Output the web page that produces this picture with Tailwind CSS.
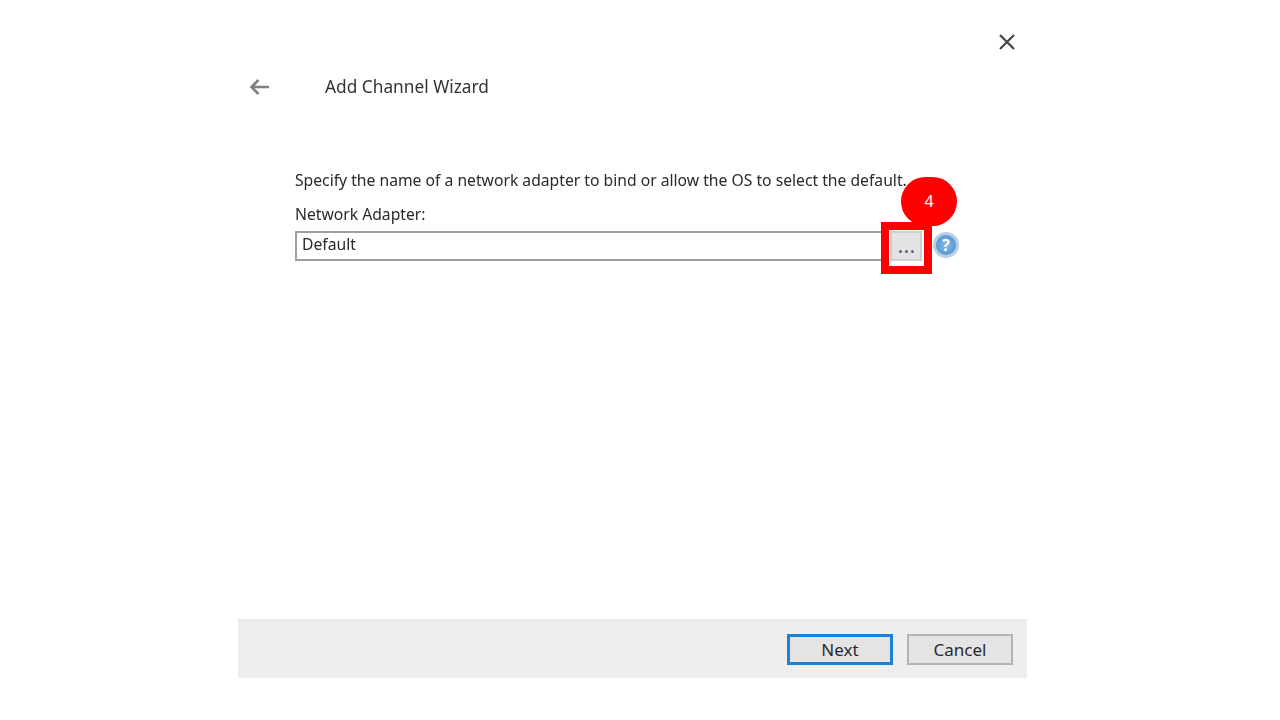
<!DOCTYPE html>
<html lang="en">
<head>
  <meta charset="UTF-8">
  <title>Add Channel Wizard</title>
  <script src="https://cdn.jsdelivr.net/npm/@tailwindcss/browser@4"></script>
</head>
<body class="bg-white font-['Noto_Sans',sans-serif] text-[#333]">
  <div class="relative w-[1280px] h-[720px] overflow-hidden">
    <!-- Wizard window -->
    <div class="ml-[238px] w-[789px] h-[678px] flex flex-col blur-[0.6px]">
      <div class="h-[619px] relative">
        <!-- close -->
        <div class="flex justify-end pt-[33px] pr-[11px]">
          <svg width="18" height="18" viewBox="0 0 18 18" fill="none" stroke="#444" stroke-width="2.2"><path d="M2 2 L16 16 M16 2 L2 16"/></svg>
        </div>
        <!-- header -->
        <div class="flex items-center mt-[24px] pl-[11px] h-[24px]">
          <svg class="-mt-[1px]" width="21" height="18" viewBox="0 0 21 18" fill="none" stroke="#808080" stroke-width="2.6"><path d="M20 9 H2 M9.5 2 L2.5 9 L9.5 16"/></svg>
          <span class="ml-[55px] text-[17.3px] leading-[24px] text-[#333]">Add Channel Wizard</span>
        </div>
        <!-- form -->
        <div class="pl-[57px] pt-[69px]">
          <p class="text-[15.7px] leading-[24px] text-[#2a2a2a] whitespace-nowrap">Specify the name of a network adapter to bind or allow the OS to select the default.</p>
          <p class="mt-[10px] text-[15.7px] leading-[24px] text-[#2a2a2a]">Network Adapter:</p>
          <div class="flex items-center mt-[5px]">
            <div class="w-[587px] h-[30px] border-2 border-[#a0a0a0] border-r-0 pl-[5px] text-[15.7px] leading-[23px] text-[#2a2a2a]">Default</div>
            <div class="ml-[8px] w-[32px] h-[30px] bg-[#e3e3e3] border-2 border-[#d0d0d0] flex items-end justify-center pb-[6px] gap-[3px]">
              <span class="w-[3px] h-[3px] rounded-full bg-[#5f5f7c]"></span>
              <span class="w-[3px] h-[3px] rounded-full bg-[#5f5f7c]"></span>
              <span class="w-[3px] h-[3px] rounded-full bg-[#5f5f7c]"></span>
            </div>
            <div class="ml-[11px] mb-[2px] w-[26px] h-[26px] rounded-full bg-radial from-[#8cc0ea] to-[#3f86c8] border-[3px] border-[#b9cfe0] flex items-center justify-center text-white text-[16px] font-bold leading-none">?</div>
          </div>
        </div>
      </div>
      <!-- footer -->
      <div class="h-[59px] bg-[#eeeeee] border-t-2 border-[#e8e8e8] flex items-center justify-end gap-[14px] pr-[14px]">
        <button class="w-[106px] h-[31px] bg-[#e4e4e4] border-[3px] border-[#1a82d8] text-[17px] leading-none text-[#2a2a2a]">Next</button>
        <button class="w-[106px] h-[31px] bg-[#e4e4e4] border-2 border-[#b4b4b4] text-[17px] leading-none text-[#2a2a2a]">Cancel</button>
      </div>
    </div>

    <!-- Annotation overlay -->
    <div class="absolute left-[881px] top-[222px] w-[51px] h-[52px] border-[8px] border-[#ff0000]"></div>
    <div class="absolute left-[901px] top-[177px] w-[56px] h-[49px] rounded-full bg-[#ff0000] flex items-center justify-center pb-[2px] text-white text-[16px]">4</div>
  </div>
</body>
</html>
